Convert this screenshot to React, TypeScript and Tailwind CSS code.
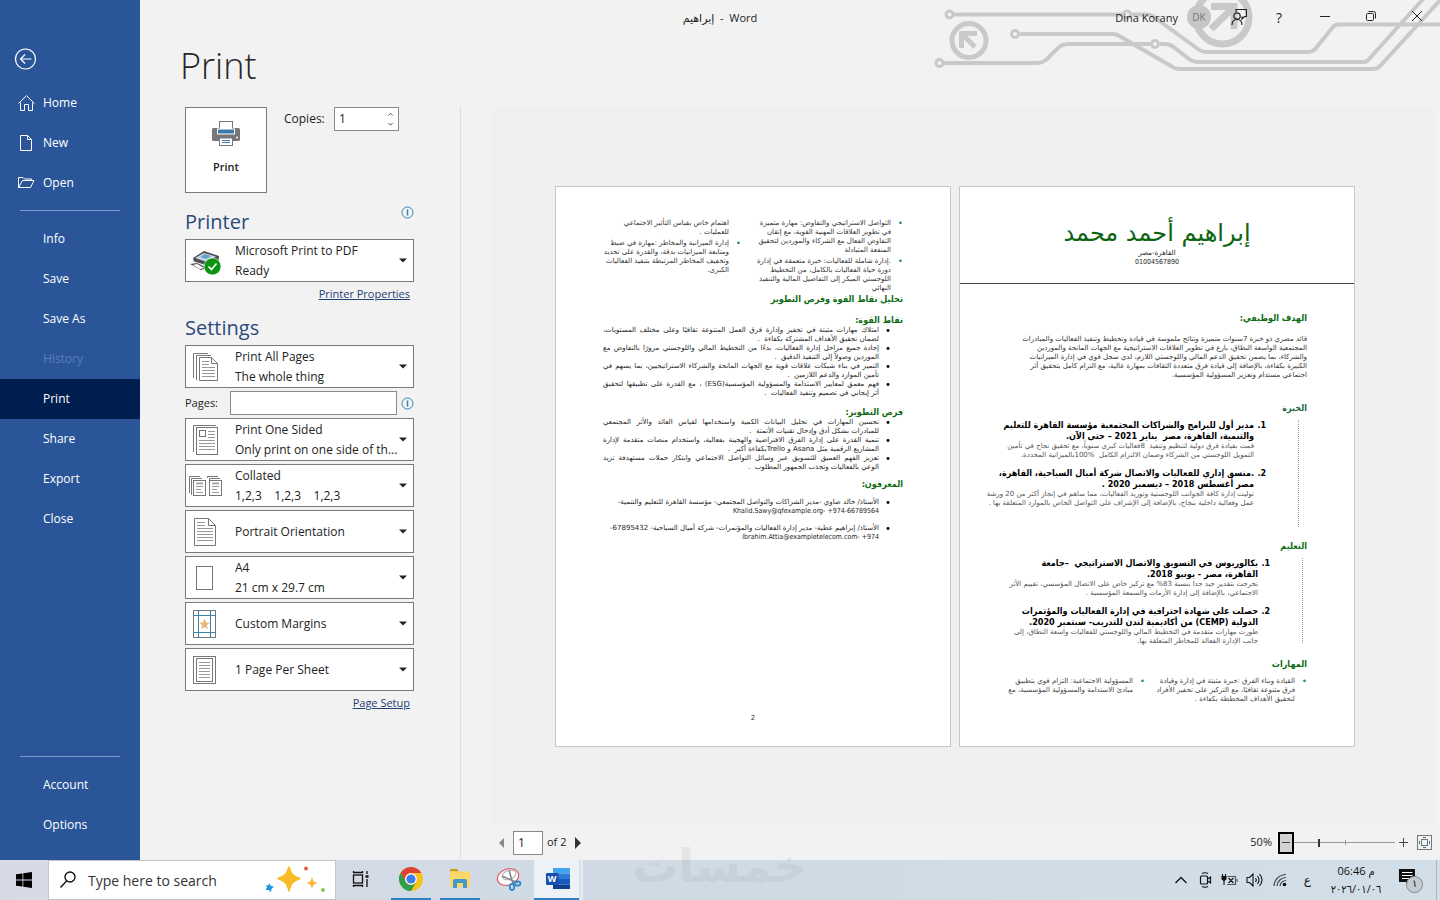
import type { ReactNode } from "react";

const mainNav = ["Info", "Save", "Save As", "History", "Print", "Share", "Export", "Close"];

const objective = [
  "قائد مصري ذو خبرة 7سنوات متميزة ونتائج ملموسة في قيادة وتخطيط وتنفيذ الفعاليات والمبادرات",
  "المجتمعية الواسعة النطاق، بارع في تطوير العلاقات الاستراتيجية مع الجهات المانحة والموردين",
  "والشركاء، بما يضمن تحقيق الدعم المالي واللوجستي اللازم، لدي سجل قوي في إدارة الميزانيات",
  "الكبيرة بكفاءة، بالإضافة إلى قيادة فرق متعددة الثقافات بمهارة عالية، مع التزام كامل بتحقيق أثر",
  "اجتماعي مستدام وتعزيز المسؤولية المؤسسية.",
];

type Entry = { title: string[]; body: string[] };

const experience: Entry[] = [
  {
    title: ["مدير أول للبرامج والشراكات المجتمعية مؤسسة القاهرة للتعليم", "والتنمية، القاهرة، مصر  يناير 2021 – حتى الآن."],
    body: [
      "قمت بقيادة فرق دولية لتنظيم وتنفيذ  8فعاليات كبرى سنوياً، مع تحقيق نجاح في تأمين",
      "التمويل اللوجستي من الشركاء وضمان الالتزام الكامل  %100بالميزانية المحددة.",
    ],
  },
  {
    title: [".منسق إداري للفعاليات والاتصال شركة أميال السياحية، القاهرة،", "مصر أغسطس 2018 – ديسمبر 2020 ."],
    body: [
      "توليت إدارة كافة الجوانب اللوجستية وتوريد الفعاليات، مما ساهم في إنجاز أكثر من 20 ورشة",
      "عمل وفعالية داخلية بنجاح، بالإضافة إلى الإشراف على التواصل الخاص بالموارد المتعلقة بها .",
    ],
  },
];

const education: Entry[] = [
  {
    title: ["بكالوريوس في التسويق والاتصال الاستراتيجي  –جامعة", "القاهرة، مصر - يونيو 2018."],
    body: [
      "تخرجت بتقدير جيد جدا بنسبة 83% مع تركيز خاص على الاتصال المؤسسي، تقييم الأثر",
      "الاجتماعي، بالإضافة إلى إدارة الأزمات والسمعة المؤسسية .",
    ],
  },
  {
    title: ["حصلت على شهادة احترافية في إدارة الفعاليات والمؤتمرات", "الدولية (CEMP) من أكاديمية لندن للتدريب- سبتمبر 2020."],
    body: [
      "طورت مهارات متقدمة في التخطيط المالي واللوجستي للفعاليات واسعة النطاق، إلى",
      "جانب الإدارة الفعالة للمخاطر المتعلقة بها.",
    ],
  },
];

const strengths = [
  ["امتلاك مهارات مثبتة في تحفيز وإدارة فرق العمل المتنوعة ثقافيًا وعلى مختلف المستويات،", "لضمان تحقيق الأهداف المشتركة بكفاءة  ."],
  ["إجادة جميع مراحل إدارة الفعاليات، بدءًا من التخطيط المالي واللوجستي مرورًا بالتفاوض مع", "الموردين وصولاً إلى التنفيذ الدقيق  ."],
  ["التميز في بناء شبكات علاقات قوية مع الجهات المانحة والشركاء الاستراتيجيين، بما يسهم في", "تأمين الموارد والدعم اللازمين  ."],
  ["فهم معمق لمعايير الاستدامة والمسؤولية المؤسسية(ESG) ، مع القدرة على تطبيقها لتحقيق", "أثر إيجابي في تصميم وتنفيذ الفعاليات  ."],
];

const growth = [
  ["تحسين المهارات في تحليل البيانات الكمية واستخدامها لقياس العائد والأثر المجتمعي", "للمبادرات بشكل أدق وإدخال تقنيات الأتمتة  ."],
  ["تنمية القدرة على إدارة الفرق الافتراضية والهجينة بفعالية، واستخدام منصات متقدمة لإدارة", "المشاريع الرقمية مثل Asana و Trelloبكفاءة أكبر  ."],
  ["تعزيز الفهم العميق للتسويق عبر وسائل التواصل الاجتماعي وابتكار حملات مستهدفة تزيد", "الوعي بالفعاليات وتجذب الجمهور المطلوب  ."],
];

const referees = [
  ["الأستاذ/ خالد صاوي -مدير الشراكات والتواصل المجتمعي- مؤسسة القاهرة للتعليم والتنمية-", "Khalid.Sawy@qfexample.org- +974-66789564"],
  ["الأستاذ/ إبراهيم عطية- مدير إدارة الفعاليات والمؤتمرات- شركة أميال السياحية- 67895432-", "Ibrahim.Attia@exampletelecom.com- +974"],
];

function Lines({ lines, justify = false }: { lines: string[]; justify?: boolean }) {
  return (
    <>
      {lines.map((line, i) => {
        const latin = /^[A-Z]/.test(line);
        return (
          <span
            key={line}
            dir={latin ? "ltr" : "rtl"}
            className={`block ${justify && i === 0 ? "text-justify whitespace-nowrap [text-align-last:justify]" : "text-right whitespace-pre"} ${latin ? "font-['DejaVu_Sans_Condensed','DejaVu_Sans',sans-serif]" : ""}`}
          >
            {line}
          </span>
        );
      })}
    </>
  );
}

function DocHeading({ children, className = "text-[#0b6a12]" }: { children: ReactNode; className?: string }) {
  return (
    <h3 className={`font-['DejaVu_Sans_Condensed','DejaVu_Sans',sans-serif] text-[9px] leading-3 font-bold ${className}`}>
      {children}
    </h3>
  );
}

function Skill({ lines, bullet = true }: { lines: string[]; bullet?: boolean }) {
  return (
    <li className="flex">
      <span className="w-3 shrink-0 text-[9px] text-[#2c8a66]">{bullet ? "•" : ""}</span>
      <div>
        <Lines lines={lines} />
      </div>
    </li>
  );
}

function BulletList({ items, className = "", justify = false }: { items: string[][]; className?: string; justify?: boolean }) {
  return (
    <ul className={`flex flex-col text-[7px] leading-[9px] text-[#262626] ${className}`}>
      {items.map((lines) => (
        <li key={lines[0]} className="flex">
          <span className="w-6 shrink-0 pr-3 text-[10px] text-black">•</span>
          <div className="w-[277px]">
            <Lines lines={lines} justify={justify} />
          </div>
        </li>
      ))}
    </ul>
  );
}

function Entries({ items }: { items: Entry[] }) {
  return (
    <ol className="flex flex-col gap-2">
      {items.map((entry, i) => (
        <li key={entry.title[0]} className="flex">
          <span className="w-3 shrink-0 text-[8px] leading-[11px] font-bold text-black">{i + 1}.</span>
          <div>
            <div className="font-['DejaVu_Sans_Condensed','DejaVu_Sans',sans-serif] text-[9px] leading-[11px] font-bold text-black">
              <Lines lines={entry.title} />
            </div>
            <div className="text-[7px] leading-[9px] text-[#555]">
              <Lines lines={entry.body} />
            </div>
          </div>
        </li>
      ))}
    </ol>
  );
}

function Sheet({ children }: { children: ReactNode }) {
  return (
    <article
      dir="rtl"
      className="flex h-[561px] w-[396px] shrink-0 flex-col overflow-hidden border border-[#c6c6c6] bg-white font-['DejaVu_Sans',sans-serif]"
    >
      {children}
    </article>
  );
}

function FirstSheet() {
  return (
    <Sheet>
      <header className="h-[97px] border-b border-[#444] pt-[30px] text-center">
        <h2 className="text-[24px] leading-8 text-[#0b6410]">إبراهيم أحمد محمد</h2>
        <p className="text-[7px] leading-[9px] text-[#222]">القاهرة-مصر</p>
        <p className="font-['DejaVu_Sans_Condensed','DejaVu_Sans',sans-serif] text-[7px] leading-[9px] text-[#222]">01004567890</p>
      </header>
      <div className="px-[47px]">
        <DocHeading className="mt-7 text-[#0b6a12]">الهدف الوظيفي:</DocHeading>
        <div className="mt-[11px] text-[7px] leading-[9px] text-[#333]">
          <Lines lines={objective} />
        </div>
        <DocHeading className="mt-[22px] text-[#1c6445]">الخبرة</DocHeading>
        <div className="mt-1.5 mr-2 h-[107px] border-r border-dotted border-[#999] pr-8">
          <Entries items={experience} />
        </div>
        <DocHeading className="mt-[13px] text-[#0b6a12]">التعليم</DocHeading>
        <div className="mt-1.5 mr-1 h-[85px] border-r border-dotted border-[#999] pr-8">
          <Entries items={education} />
        </div>
        <DocHeading className="mt-[15px] text-[#0b6a12]">المهارات</DocHeading>
        <ul className="mt-[7px] grid grid-cols-[162px_162px] text-[7px] leading-[9px] text-[#444]">
          <Skill
            lines={["القيادة وبناء الفرق :خبرة مثبتة في إدارة وقيادة", "فرق متنوعة ثقافيًا، مع التركيز على تحفيز الأفراد", "لتحقيق الأهداف المخططة بكفاءة ."]}
          />
          <Skill lines={["المسؤولية الاجتماعية: التزام قوي بتطبيق", "مبادئ الاستدامة والمسؤولية المؤسسية، مع"]} />
        </ul>
      </div>
    </Sheet>
  );
}

function SecondSheet() {
  return (
    <Sheet>
      <div className="flex-1 px-[47px] pt-8">
        <div className="grid grid-cols-[162px_162px] text-[7px] leading-[9px] text-[#333]">
          <ul className="flex flex-col gap-0.5">
            <Skill
              lines={["التواصل الاستراتيجي والتفاوض: مهارة متميزة", "في تطوير العلاقات المهنية القوية، مع إتقان", "التفاوض الفعال مع الشركاء والموردين لتحقيق", "المنفعة المتبادلة"]}
            />
            <Skill
              lines={[".إدارة شاملة للفعاليات: خبرة متعمقة في إدارة", "دورة حياة الفعاليات بالكامل، من التخطيط", "اللوجستي المبكر إلى التفاصيل المالية والتنفيذ", "النهائي"]}
            />
          </ul>
          <ul className="flex flex-col gap-0.5">
            <Skill bullet={false} lines={["اهتمام خاص بقياس التأثير الاجتماعي", "للعمليات ."]} />
            <Skill
              lines={["إدارة الميزانية والمخاطر :مهارة في ضبط", "ومتابعة الميزانيات بدقة، والقدرة على تحديد", "وتخفيف المخاطر المرتبطة بتنفيذ الفعاليات", "الكبرى."]}
            />
          </ul>
        </div>
        <DocHeading>تحليل نقاط القوة وفرص التطوير</DocHeading>
        <DocHeading className="mt-[9px] text-[#0b6a12]">نقاط القوة:</DocHeading>
        <BulletList items={strengths} justify />
        <DocHeading className="mt-2 text-[#0b6a12]">فرص التطوير:</DocHeading>
        <BulletList items={growth} justify />
        <DocHeading className="mt-1.5 text-[#0b6a12]">المعرفون:</DocHeading>
        <BulletList items={referees} className="mt-2 gap-2" />
      </div>
      <footer className="pb-[22px] text-center text-[7px] leading-3 text-[#333]">2</footer>
    </Sheet>
  );
}

function Circuits() {
  return (
    <svg className="pointer-events-none absolute top-0 right-0" width="540" height="80" viewBox="0 0 540 80" fill="none" stroke="#c9c9c9" strokeWidth="4" aria-hidden="true">
      <path d="M54 14.5H223M232 14.5H247Q251 14.5 254 17L298 49Q302 52 306 52H408Q413 52 416 48L433 27Q435 24.500 439 24.500H540" />
      <path d="M120 34H213Q217 34 221 37L271 66Q275 69 280 69H473Q477 69 480 66L544 -4" />
      <path d="M44 63H138Q142 63 146 60L159 47Q163 44 168 44H250M260 44H265Q270 44 275 48L289 59Q293 62 298 62H464Q467 62 470 58L524 -2" />
      <g strokeWidth="3">
        <circle cx="49.500" cy="14.500" r="3.500" />
        <circle cx="115" cy="34" r="3.500" />
        <circle cx="39.500" cy="63" r="3.500" />
        <circle cx="227" cy="14.500" r="3.500" />
        <circle cx="255" cy="44" r="3.500" />
      </g>
      <circle cx="69" cy="40.500" r="17" strokeWidth="5" />
      <path d="M77 33.500H61.500V48M62 34L75 47" strokeWidth="5" />
      <circle cx="322.500" cy="17.500" r="26.500" strokeWidth="7" />
      <path d="M311 6.500H334V29M334 7L311 29" strokeWidth="7" />
    </svg>
  );
}

function TitleBar() {
  return (
    <header className="relative -ml-[140px] grid h-[34px] grid-cols-[1fr_auto_1fr] items-center text-[11px] text-[#222]">
      <span />
      <h1 className="pt-0.5 font-['Open_Sans','DejaVu_Sans',sans-serif]" dir="ltr">
        إبراهيم&nbsp; - &nbsp;Word
      </h1>
      <div className="flex items-center justify-end">
        <span className="mr-[9px] pt-0.5">Dina Korany</span>
        <span className="flex size-6 items-center justify-center rounded-full bg-[#c6c6c6] text-[10px] text-[#777]">DK</span>
        <button aria-label="Feedback" className="ml-5 w-4">
          <svg width="16" height="18" viewBox="0 0 16 18" fill="none" stroke="#222" strokeWidth="1.200">
            <circle cx="6" cy="8" r="3.200" />
            <path d="M1 17C1 13 3 11.500 6 11.500S11 13 11 17M5 4V1.500H15.500V8.500H13.500L11 11V8.500" />
          </svg>
        </button>
        <button aria-label="Help" className="ml-6 w-4 text-[14px]">?</button>
        <button aria-label="Minimize" className="ml-[30px] w-4">
          <svg width="16" height="16" viewBox="0 0 16 16" stroke="#222"><path d="M3 7.500H13" /></svg>
        </button>
        <button aria-label="Restore" className="ml-[30px] w-4">
          <svg width="16" height="16" viewBox="0 0 16 16" fill="none" stroke="#222">
            <rect x="3.500" y="4.500" width="7" height="7" rx="1" />
            <path d="M5.500 2.500H10.500Q12.500 2.500 12.500 4.500V9.500" />
          </svg>
        </button>
        <button aria-label="Close" className="mr-[15px] ml-[30px] w-4">
          <svg width="16" height="16" viewBox="0 0 16 16" stroke="#222"><path d="M3 2L13 12M13 2L3 12" /></svg>
        </button>
      </div>
    </header>
  );
}

function NavItem({ label, icon }: { label: string; icon?: ReactNode }) {
  const active = label === "Print";
  return (
    <a
      href="#"
      aria-current={active ? "page" : undefined}
      className={`flex h-10 items-center text-[12px] ${active ? "bg-[#001e4f]" : ""} ${label === "History" ? "text-[#5a7db8]" : "text-white"}`}
    >
      <span className="flex w-[43px] shrink-0 justify-center">{icon}</span>
      {label}
    </a>
  );
}

function Sidebar() {
  return (
    <nav className="z-10 flex w-[140px] shrink-0 flex-col bg-[#2a5699] pt-12 pb-[15px]">
      <button aria-label="Back" className="mb-[13px] ml-[14px] w-[23px]">
        <svg width="23" height="22" viewBox="0 0 23 22" fill="none" stroke="#fff" strokeWidth="1.200">
          <circle cx="11.500" cy="11" r="10" />
          <path d="M17.500 11H6.500M11 6.500L6.500 11L11 15.500" />
        </svg>
      </button>
      <NavItem
        label="Home"
        icon={
          <svg className="ml-[9px]" width="17" height="17" viewBox="0 0 17 17" fill="none" stroke="#fff">
            <path d="M.5 8.500L8.500 .7L16.500 8.500M2.500 7.500V15.500H6.500V9.500H10.500V15.500H14.500V7.500" />
          </svg>
        }
      />
      <NavItem
        label="New"
        icon={
          <svg className="ml-[9px]" width="14" height="17" viewBox="0 0 14 17" fill="none" stroke="#fff">
            <path d="M1.500 .5H8.500L12.500 4.500V15.500H1.500ZM8.500 .5V4.500H12.500" />
          </svg>
        }
      />
      <NavItem
        label="Open"
        icon={
          <svg className="ml-[9px]" width="17" height="15" viewBox="0 0 17 15" fill="none" stroke="#fff">
            <path d="M.5 11.500V1.500H5L6.500 3H13.500V4.500M.5 11.500L4.500 4.500H16L12.500 11.500Z" />
          </svg>
        }
      />
      <hr className="mx-5 mt-[7px] mb-2 border-[#7c9bca]" />
      {mainNav.map((label) => (
        <NavItem key={label} label={label} />
      ))}
      <hr className="mx-5 mt-auto mb-2 border-[#7c9bca]" />
      <NavItem label="Account" />
      <NavItem label="Options" />
    </nav>
  );
}

function InfoIcon() {
  return (
    <svg className="mt-px" width="13" height="13" viewBox="0 0 13 13" fill="none" stroke="#2e86b5" role="img" aria-label="Info">
      <circle cx="6.500" cy="6.500" r="5.500" />
      <path d="M6.500 3.500V9.500" strokeWidth="1.500" />
    </svg>
  );
}

function Setting({ name, value, detail, icon }: { name: string; value: string; detail?: string; icon: ReactNode }) {
  return (
    <label className="flex h-[43px] items-center border border-[#7a7a7a] bg-white">
      <span className="flex w-[39px] shrink-0 justify-center">{icon}</span>
      <span className="ml-2.5 flex min-w-0 flex-1 flex-col">
        <select aria-label={name} className="h-5 appearance-none bg-transparent leading-5">
          <option>{value}</option>
        </select>
        {detail && <span className="h-5 leading-5 whitespace-pre">{detail}</span>}
      </span>
      <svg className="mx-[6px]" width="8" height="5" viewBox="0 0 8 5" fill="#222"><path d="M0 .5H8L4 4.500Z" /></svg>
    </label>
  );
}

const iconProps = { fill: "none", stroke: "#777", width: 34, height: 34, viewBox: "0 0 34 34" };

function PrinterIcon() {
  return (
    <svg {...iconProps} stroke="none">
      <path d="M4 14L15 7L30 12L29 22L18 26L5 18Z" fill="#4a4d52" />
      <path d="M6 14L15 9L27 12.500L18 18Z" fill="#c9d6df" />
      <path d="M11 13L16 10L22 12L17 15Z" fill="#5fa0cf" />
      <path d="M4 17L17 21V24L5 20Z" fill="#e4e4e4" />
      <path d="M1 20L8 19L18 24L12 26Z" fill="#555" />
      <path d="M4 21L8 20L15 24L11 25Z" fill="#fff" />
      <circle cx="23.500" cy="22.500" r="8.500" fill="#0a9412" stroke="#fff" strokeWidth=".6" />
      <path d="M19.500 22.500L22.500 25.500L27.500 19.500" fill="none" stroke="#fff" strokeWidth="1.600" />
    </svg>
  );
}

function PagesIcon() {
  return (
    <svg {...iconProps}>
      <path d="M4.500 28V3.500H19M7.500 30V5.500H22" />
      <path d="M10.500 7.500H22.500L28.500 13.500V30.500H10.500ZM22.500 7.500V13.500H28.500" fill="#fff" />
      <path d="M13 11.500H20M13 14.500H20M13 17.500H26M13 20.500H26M13 23.500H26M13 26.500H26" stroke="#999" />
    </svg>
  );
}

function OneSidedIcon() {
  return (
    <svg {...iconProps}>
      <path d="M4.500 29V2.500H27" />
      <rect x="7.500" y="4.500" width="21" height="27" fill="#fff" />
      <rect x="10.500" y="7.500" width="6" height="6" />
      <path d="M19 8.500H26M19 11.500H26M19 14.500H26M10 17.500H26M10 20.500H26M10 23.500H26M10 26.500H26" stroke="#999" />
    </svg>
  );
}

function CollatedIcon() {
  return (
    <svg {...iconProps}>
      {[0, 16].map((x) => (
        <g key={x} transform={`translate(${x} 0)`}>
          <path d={x ? "M2.500 9V7.500H13M4.500 24V9.500H15" : "M.5 24V7.500H11M2.500 26V9.500H13"} />
          <rect x="4.500" y="11.500" width="12" height="15" fill="#fff" />
          <path d="M7 14.500H14" stroke="#aaa" strokeWidth="2" />
          <path d="M7 17.500H14M7 20.500H12M7 23.500H14" stroke="#999" />
        </g>
      ))}
    </svg>
  );
}

function PortraitIcon() {
  return (
    <svg {...iconProps}>
      <path d="M5.500 3.500H19.500L26.500 10.500V30.500H5.500ZM19.500 3.500V10.500H26.500" />
      <path d="M8 7.500H16M8 10.500H16M8 13.500H24M8 16.500H24M8 19.500H24M8 22.500H24M8 25.500H24" stroke="#999" />
    </svg>
  );
}

function MarginsIcon() {
  return (
    <svg {...iconProps}>
      <rect x="4.500" y="3.500" width="22" height="27" />
      <path d="M9.500 3V31M21.500 3V31M4 8.500H27M4 25.500H27" stroke="#3f7fa8" />
      <path d="M15.500 11.500L17 15.500L21 15.700L17.800 18.300L19 22.300L15.500 20L12 22.300L13.200 18.300L10 15.700L14 15.500Z" fill="#e8b878" stroke="none" />
    </svg>
  );
}

function SheetIcon() {
  return (
    <svg {...iconProps}>
      <rect x="4.500" y="3.500" width="22" height="27" />
      <rect x="7.500" y="5.500" width="16" height="23" />
      <path d="M10 9.500H21M10 12.500H21M10 15.500H21M10 18.500H21M10 21.500H21M10 24.500H21" stroke="#999" />
    </svg>
  );
}

function PrintPanel() {
  return (
    <section className="flex w-[321px] shrink-0 flex-col border-r border-[#dcdcdc] pr-[46px] pl-[45px] text-[12px] text-[#222]">
      <div className="flex items-start">
        <button className="flex h-[86px] w-[82px] flex-col items-center border border-[#7a7a7a] bg-white pt-3 text-[11px] font-semibold">
          <svg width="28" height="26" viewBox="0 0 28 26">
            <rect y="8" width="28" height="13" rx="1.500" fill="#777" />
            <rect x="7.500" y="1.500" width="13" height="9" fill="#fff" stroke="#777" />
            <rect x="5.500" y="9" width="17" height="5" fill="#3f78ad" stroke="#fff" />
            <rect x="7.500" y="18" width="13" height="7.500" fill="#fff" stroke="#777" />
            <path d="M10 20.500H18M10 22.500H18" stroke="#3f78ad" />
            <circle cx="25" cy="17.500" r="1" fill="#fff" />
          </svg>
          <span className="mt-[13px]">Print</span>
        </button>
        <label htmlFor="copies" className="ml-[17px] w-[50px] leading-6">Copies:</label>
        <div className="flex h-6 w-[65px] items-center border border-[#8a8a8a] bg-white px-1">
          <input id="copies" defaultValue="1" className="w-full min-w-0 outline-none" />
          <svg width="8" height="18" viewBox="0 0 8 18" fill="none" stroke="#333"><path d="M1.500 5L4 2.500L6.500 5M1.500 13.500L4 16L6.500 13.500" /></svg>
        </div>
      </div>

      <div className="mt-3 flex h-[34px] justify-between">
        <h2 className="pt-[3px] text-[20px] leading-7 text-[#2b4a7d]">Printer</h2>
        <InfoIcon />
      </div>
      <Setting name="Printer" value="Microsoft Print to PDF" detail="Ready" icon={<PrinterIcon />} />
      <a href="#" className="mt-1 mr-1 self-end text-[11px] leading-4 text-[#1f4173] underline">Printer Properties</a>

      <h2 className="mt-3 mb-[3px] text-[20px] leading-7 text-[#2b4a7d]">Settings</h2>
      <div className="flex flex-col gap-[3px]">
        <Setting name="Page range" value="Print All Pages" detail="The whole thing" icon={<PagesIcon />} />
        <div className="flex h-6 items-center justify-between text-[11px]">
          <label htmlFor="pages" className="w-[45px]">Pages:</label>
          <input id="pages" className="mr-1 h-6 min-w-0 flex-1 border border-[#8a8a8a] bg-white" />
          <InfoIcon />
        </div>
        <Setting name="Sides" value="Print One Sided" detail="Only print on one side of th..." icon={<OneSidedIcon />} />
        <Setting name="Collation" value="Collated" detail="1,2,3    1,2,3    1,2,3" icon={<CollatedIcon />} />
        <Setting name="Orientation" value="Portrait Orientation" icon={<PortraitIcon />} />
        <Setting
          name="Paper size"
          value="A4"
          detail="21 cm x 29.7 cm"
          icon={<svg {...iconProps}><rect x="7.500" y="5.500" width="16" height="23" /></svg>}
        />
        <Setting name="Margins" value="Custom Margins" icon={<MarginsIcon />} />
        <Setting name="Pages per sheet" value="1 Page Per Sheet" icon={<SheetIcon />} />
      </div>
      <a href="#" className="mt-1 mr-1 self-end text-[11px] leading-4 text-[#1f4173] underline">Page Setup</a>
    </section>
  );
}

function Preview() {
  return (
    <section className="flex min-w-0 flex-1 flex-col pr-[5px] pl-[30px] text-[12px] text-[#222]">
      <div className="flex flex-1 items-center justify-center bg-[#f0f0f0] pt-0.5 pr-4">
        <div dir="rtl" className="flex gap-2">
          <FirstSheet />
          <SecondSheet />
        </div>
      </div>
      <div className="flex h-[35px] items-center pt-1 pr-[3px] pl-2">
        <button aria-label="Previous page" className="w-[14px]">
          <svg width="5" height="10" viewBox="0 0 5 10" fill="#888"><path d="M5 0V10L0 5Z" /></svg>
        </button>
        <input aria-label="Current page" defaultValue="1" className="h-6 w-[30px] border border-[#8a8a8a] bg-white pl-1" />
        <span className="ml-1 w-7 text-[11px]">of 2</span>
        <button aria-label="Next page">
          <svg width="6" height="12" viewBox="0 0 6 12" fill="#333"><path d="M0 0V12L6 6Z" /></svg>
        </button>
        <span className="mr-1.5 ml-auto text-[11px]">50%</span>
        <button aria-label="Zoom out" className="flex h-[22px] w-4 items-center justify-center border-2 border-black bg-[#d2d2d2]">
          <svg width="8" height="2" viewBox="0 0 8 2" fill="#444"><path d="M0 0H8V1H0Z" /></svg>
        </button>
        <div className="relative flex w-[101px] items-center">
          <span className="absolute left-1/2 h-[5px] w-px bg-[#999]" />
          <input
            type="range"
            aria-label="Zoom"
            defaultValue={24}
            className="relative h-px w-full appearance-none bg-[#999] [&::-webkit-slider-thumb]:h-2 [&::-webkit-slider-thumb]:w-0.5 [&::-webkit-slider-thumb]:appearance-none [&::-webkit-slider-thumb]:bg-[#333]"
          />
        </div>
        <button aria-label="Zoom in" className="ml-1">
          <svg width="9" height="9" viewBox="0 0 9 9" stroke="#444"><path d="M0 4.500H9M4.500 0V9" /></svg>
        </button>
        <button aria-label="Zoom to page" className="ml-[9px]">
          <svg width="15" height="15" viewBox="0 0 15 15" fill="none" stroke="#777">
            <rect x=".5" y=".5" width="14" height="14" />
            <rect x="4.500" y="4.500" width="6" height="6" />
            <path d="M6 2.500H9M6 12.500H9M2.500 6V9M12.500 6V9" stroke="#2d7f9e" />
          </svg>
        </button>
      </div>
    </section>
  );
}

function ChromeIcon() {
  return (
    <svg width="24" height="24" viewBox="0 0 24 24">
      <circle cx="12" cy="12" r="12" fill="#f6c21c" />
      <path d="M1.600 6A12 12 0 0 1 22.400 6H12A6 6 0 0 0 6.800 15Z" fill="#dd4437" />
      <path d="M1.600 6A12 12 0 0 0 12 24L17.200 15A6 6 0 0 1 6.800 15Z" fill="#2f9e4f" />
      <circle cx="12" cy="12" r="5.800" fill="#fff" />
      <circle cx="12" cy="12" r="4.600" fill="#3b7ded" />
    </svg>
  );
}

function FolderIcon() {
  return (
    <svg width="22" height="20" viewBox="0 0 22 20">
      <path d="M1 1Q1 0 2 0H8L10 2.500H1Z" fill="#d49a1a" />
      <path d="M1 2.500H20Q21 2.500 21 4V18H1Z" fill="#fbd669" />
      <path d="M4 19V12Q4 10 6 10H16Q18 10 18 12V19H14V14H8V19Z" fill="#4596c9" />
    </svg>
  );
}

function SnipIcon() {
  return (
    <svg width="26" height="26" viewBox="0 0 26 26" fill="none">
      <ellipse cx="12" cy="11" rx="11" ry="8" transform="rotate(-20 12 11)" fill="#fff" stroke="#d9606a" strokeWidth="1.200" />
      <ellipse cx="13" cy="9" rx="7" ry="4.500" transform="rotate(-20 13 9)" stroke="#aaa" />
      <path d="M13 4L17 18M6 10L22 17" stroke="#7c8791" strokeWidth="1.500" />
      <ellipse cx="16" cy="21" rx="2.200" ry="3.200" stroke="#2b8cc9" strokeWidth="1.800" />
      <ellipse cx="21.500" cy="17.500" rx="3" ry="2.200" stroke="#2b8cc9" strokeWidth="1.800" />
    </svg>
  );
}

function WordIcon() {
  return (
    <span className="relative flex">
      <svg width="25" height="22" viewBox="0 0 25 22">
        <path d="M7 0H24V5.500H7Z" fill="#41a5ee" />
        <path d="M7 5.500H24V11H7Z" fill="#2b7cd3" />
        <path d="M7 11H24V16.500H7Z" fill="#185abd" />
        <path d="M7 16.500H24V21H7Z" fill="#103f91" />
        <rect y="5" width="12.500" height="12" rx="1" fill="#174fae" />
      </svg>
      <span className="absolute top-[5px] left-0 w-3 text-center text-[9px] leading-3 font-bold text-white">W</span>
    </span>
  );
}

function SparkleArt() {
  return (
    <svg width="62" height="28" viewBox="0 0 62 28" aria-hidden="true">
      <path d="M24 1C26 8 28 10 35 12.500C28 15 26 17 24 25C22 17 20 15 13 12.500C20 10 22 8 24 1Z" fill="#f8bd25" stroke="#f8bd25" strokeWidth="1.500" strokeLinejoin="round" />
      <path d="M47 11C48 15 49 16 52.500 17C49 18 48 19 47 23C46 19 45 18 41.500 17C45 16 46 15 47 11Z" fill="#f6b73c" />
      <path d="M4 17L6 20L9 20.500L6.500 23L6 26L3.500 24L.5 24L2 21.500L1 19L3.500 19.500Z" fill="#2196dd" />
      <circle cx="41" cy="2.500" r="2" fill="#e0603a" />
      <circle cx="58" cy="24" r="2" fill="#8cc460" />
    </svg>
  );
}

function TaskButton({ label, children, className = "" }: { label: string; children: ReactNode; className?: string }) {
  return (
    <button aria-label={label} className={`flex h-10 w-10 shrink-0 items-center justify-center border-b-2 ${className}`}>
      {children}
    </button>
  );
}

function Taskbar() {
  return (
    <footer className="flex h-10 items-center bg-linear-to-r from-[#d6dae7] via-[#cfdbe4] to-[#d2dfe8] text-[#111]">
      <button aria-label="Start" className="flex w-12 shrink-0 justify-center">
        <svg width="16" height="16" viewBox="0 0 16 16"><path d="M0 2.300L6.500 1.400V7.600H0ZM7.300 1.300L16 0V7.600H7.300ZM0 8.400H6.500V14.600L0 13.700ZM7.300 8.400H16V16L7.300 14.700Z" /></svg>
      </button>
      <label className="flex h-10 w-[288px] shrink-0 items-center border border-[#c4c4c4] bg-white pr-2 pl-[11px]">
        <svg width="16" height="18" viewBox="0 0 16 18" fill="none" stroke="#111" strokeWidth="1.400"><circle cx="10" cy="6" r="5" /><path d="M6.500 10L.5 16.500" /></svg>
        <input aria-label="Search" placeholder="Type here to search" className="ml-3 min-w-0 flex-1 text-[14px] outline-none placeholder:text-[#333]" />
        <SparkleArt />
      </label>
      <TaskButton label="Task view" className="ml-1 border-transparent">
        <svg width="17" height="16" viewBox="0 0 17 16" fill="none" stroke="#111" strokeWidth="1.300">
          <rect x="1.500" y="4" width="9" height="8" />
          <path d="M1.500 0V1.500H10.500V0M1.500 16V14.500H10.500V16M15 0V3M15 8V16" />
          <path d="M13.500 5.500H16.500" strokeWidth="2.500" />
        </svg>
      </TaskButton>
      <TaskButton label="Chrome" className="ml-[11px] border-[#2f7fc4]"><ChromeIcon /></TaskButton>
      <TaskButton label="File Explorer" className="ml-[9px] border-[#2f7fc4]"><FolderIcon /></TaskButton>
      <TaskButton label="Snipping Tool" className="ml-[9px] border-transparent"><SnipIcon /></TaskButton>
      <button aria-label="Word" className="ml-[5px] flex h-10 w-[45px] items-center justify-center border-b-2 border-[#2f7fc4] bg-[#ecf2f5] pl-1"><WordIcon /></button>
      <span className="ml-px h-10 w-[3px] bg-[#e0e9ee]" />

      <div className="ml-auto flex items-center">
        <svg width="12" height="8" viewBox="0 0 12 8" fill="none" stroke="#111" strokeWidth="1.300" role="img" aria-label="Show hidden icons"><path d="M.5 7L6 1.500L11.500 7" /></svg>
        <svg className="ml-3" width="13" height="16" viewBox="0 0 13 16" fill="none" stroke="#111" strokeWidth="1.200">
          <rect x="1.500" y="4" width="7" height="8" rx="1" />
          <path d="M8.500 7L11.500 5V11L8.500 9M3 1.500Q6 0 9 1.500M3 14.500Q6 16 9 14.500" />
        </svg>
        <svg className="ml-[9px]" width="17" height="14" viewBox="0 0 17 14" fill="none" stroke="#111" strokeWidth="1.100">
          <path d="M6 11.500H14.500V3.500H6.500M16 6V9" stroke="#555" />
          <path d="M7.500 5L12.500 10M12.500 5L7.500 10M1.500 1V3M4.500 1V3M3 7.500V12" />
          <path d="M1 3.500H5V6L3 7.500L1 6Z" fill="#111" />
        </svg>
        <svg className="ml-2" width="18" height="16" viewBox="0 0 18 16" fill="none" stroke="#111" strokeWidth="1.100">
          <path d="M1 5.500H3.500L7 2V14L3.500 10.500H1ZM9.500 6Q11 8 9.500 10M11.500 4Q14.500 8 11.500 12M13.500 2Q18.500 8 13.500 14" />
        </svg>
        <svg className="ml-[9px]" width="14" height="14" viewBox="0 0 14 14" fill="none" stroke="#111" strokeWidth="1.200">
          <path d="M1 13A12 12 0 0 1 13 1.500M4 13A9 9 0 0 1 13 4.500M7 13A6 6 0 0 1 13 7.500" stroke="#444" />
          <circle cx="11.500" cy="11.500" r="1.800" fill="#111" stroke="none" />
        </svg>
        <span className="ml-[17px] font-['DejaVu_Sans',sans-serif] text-[12px]">ع</span>
        <div className="ml-[14px] w-[62px] text-center font-['Open_Sans','DejaVu_Sans_Condensed','DejaVu_Sans',sans-serif] text-[11px] leading-[18px]">
          <div dir="ltr">06:46 م</div>
          <div dir="ltr">٢٠٢٦/٠١/٠٦</div>
        </div>
        <button aria-label="Notifications" className="relative ml-3 flex">
          <svg width="24" height="26" viewBox="0 0 24 26">
            <path d="M0 2H16V15H10L7 18V15H0Z" fill="#111" />
            <path d="M3 5.500H13.500M3 8.500H13.500M3 11.500H10" stroke="#fff" />
            <circle cx="15.500" cy="17.500" r="8" fill="#c3ccd2" stroke="#888" />
          </svg>
          <span className="absolute top-[11px] left-[13px] font-['DejaVu_Sans',sans-serif] text-[10px] leading-3">١</span>
        </button>
        <span className="mr-[3px] ml-[13px] h-10 w-px bg-[#aab4bb]" />
      </div>
    </footer>
  );
}

export default function App() {
  return (
    <div className="relative flex min-h-screen flex-col bg-[#f2f2f2] font-['Open_Sans',sans-serif]">
      <div className="flex flex-1">
        <Sidebar />
        <main className="relative flex min-w-0 flex-1 flex-col">
          <Circuits />
          <TitleBar />
          <h2 className="mt-2 mb-[17px] ml-10 text-[36px] leading-[48px] font-light text-[#262626]">Print</h2>
          <div className="flex flex-1 pb-0.5">
            <PrintPanel />
            <Preview />
          </div>
        </main>
      </div>
      <Taskbar />
      <div className="pointer-events-none absolute bottom-2 left-[632px] z-20 font-['DejaVu_Sans',sans-serif] text-[46px] leading-[52px] font-bold text-[#8a8f94]/15">
        خمسات
      </div>
    </div>
  );
}
